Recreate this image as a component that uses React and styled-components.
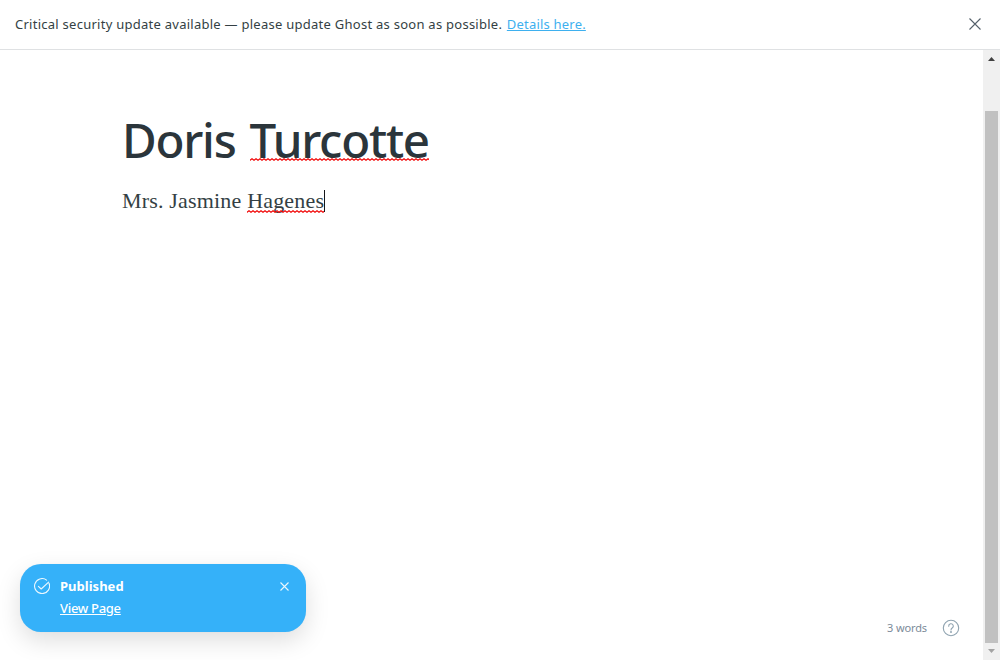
import React from "react";
import styled, { createGlobalStyle } from "styled-components";

const GlobalStyle = createGlobalStyle`
  * { box-sizing: border-box; }
  html, body { margin: 0; height: 100%; overflow: hidden; background: #fff; }
  body { font-family: "Open Sans", "Noto Sans", sans-serif; color: #394047; }
  #root { height: 100%; }
`;

const Page = styled.div`
  height: 660px;
  display: flex;
  flex-direction: column;
`;

const Banner = styled.header`
  height: 50px;
  flex: none;
  display: flex;
  align-items: center;
  justify-content: space-between;
  padding: 0 19px 1px 15px;
  border-bottom: 1px solid #dfe1e3;
  font-family: "Noto Sans", sans-serif;
  font-size: 13px;
  letter-spacing: 0.26px;
  line-height: 20px;
  color: #343f44;
  white-space: nowrap;
`;

const BannerLink = styled.a`
  margin-left: 1px;
  letter-spacing: 0.2px;
  color: #3eb0ef;
  text-decoration: underline;
`;

const IconButton = styled.button`
  display: flex;
  padding: 0;
  border: 0;
  background: none;
  color: inherit;
`;

const BannerClose = styled(IconButton)`
  color: #54606a;
`;

const Main = styled.div`
  flex: 1;
  display: flex;
  min-height: 0;
`;

const Editor = styled.main`
  flex: 1;
  display: flex;
  flex-direction: column;
  padding: 59px 122px 0;
  white-space: nowrap;
`;

const Title = styled.h1`
  margin: 0;
  height: 62px;
  font-family: "Noto Sans", sans-serif;
  font-size: 47.5px;
  font-weight: 530;
  line-height: 61px;
  letter-spacing: -1.25px;
  word-spacing: 3px;
  color: #2b353b;
`;

const Body = styled.p`
  margin: 14px 0 0;
  display: flex;
  align-items: center;
  height: 32px;
  font-family: "Liberation Serif", serif;
  font-size: 22px;
  letter-spacing: 0.18px;
  line-height: 32px;
  color: #343f44;
  white-space: pre;
`;

const Misspelled = styled.span`
  position: relative;
  display: inline-block;
`;

const Wave = styled.svg`
  position: absolute;
  left: 0;
  top: ${(p) => p.$top}px;
  width: 100%;
  height: 3px;
`;

const Caret = styled.span`
  width: 1px;
  height: 22px;
  background: #15171a;
`;

const ScrollTrack = styled.div`
  width: 17px;
  display: flex;
  flex-direction: column;
  align-items: center;
  background: #f0f0f0;
`;

const ScrollArrow = styled.svg`
  width: 17px;
  height: 17px;
  flex: none;
  fill: ${(p) => p.$color};
`;

const ScrollThumb = styled.div`
  width: 13px;
  height: 532px;
  margin-top: 44px;
  background: #c1c1c1;
`;

const Toast = styled.aside`
  position: absolute;
  left: 20px;
  top: 564px;
  width: 286px;
  height: 68px;
  display: flex;
  align-items: flex-start;
  padding: 14px 17px 0 14px;
  border-radius: 21px;
  background: #35b1f9;
  color: #fff;
  font-size: 13px;
  box-shadow: 0 9px 24px rgba(0, 0, 0, 0.13), 0 0 2px rgba(0, 0, 0, 0.03);
`;

const ToastText = styled.div`
  flex: 1;
  display: flex;
  flex-direction: column;
  align-items: flex-start;
  padding-left: 10px;
  margin-top: -3px;
  font-family: "Noto Sans", sans-serif;
  line-height: 22px;
`;

const ToastTitle = styled.strong`
  font-weight: 700;
  letter-spacing: 0.02px;
`;

const ToastLink = styled.a`
  color: #fff;
  font-weight: 500;
  letter-spacing: -0.3px;
  text-decoration: underline;
`;

const ToastClose = styled(IconButton)`
  margin-top: 4px;
  opacity: 0.9;
`;

const Status = styled.footer`
  position: absolute;
  left: 887px;
  top: 619px;
  height: 18px;
  display: flex;
  align-items: center;
  gap: 15px;
  font-family: "Noto Sans", sans-serif;
  font-size: 11px;
  line-height: 18px;
  letter-spacing: -0.12px;
  color: #7c8b9a;
  white-space: nowrap;
`;

function Cross({ size, width }) {
  return (
    <svg width={size} height={size} viewBox={`0 0 ${size} ${size}`} fill="none" stroke="currentColor" strokeWidth={width}>
      <path d={`M.5 .5 ${size - 0.5} ${size - 0.5}M${size - 0.5} .5 .5 ${size - 0.5}`} />
    </svg>
  );
}

function Squiggle({ id, top }) {
  return (
    <Wave $top={top}>
      <defs>
        <pattern id={id} width="4" height="3" patternUnits="userSpaceOnUse">
          <path d="M-1 1.5 0 2.25 2 .75 4 2.25 5 1.5" fill="none" stroke="#f00000" strokeWidth="1.1" />
        </pattern>
      </defs>
      <rect width="100%" height="3" fill={`url(#${id})`} />
    </Wave>
  );
}

export default function App() {
  return (
    <Page>
      <GlobalStyle />
      <Banner>
        <span>
          Critical security update available — please update Ghost as soon as possible.{" "}
          <BannerLink>Details here.</BannerLink>
        </span>
        <BannerClose aria-label="Close banner"><Cross size={12} width={1.1} /></BannerClose>
      </Banner>
      <Main>
        <Editor>
          <Title>
            Doris <Misspelled>Turcotte<Squiggle id="wave-title" top={49} /></Misspelled>
          </Title>
          <Body>
            Mrs. Jasmine <Misspelled>Hagenes<Squiggle id="wave-body" top={25} /></Misspelled>
            <Caret />
          </Body>
        </Editor>
        <ScrollTrack>
          <ScrollArrow $color="#404040"><path d="M5 11h7L8.5 7z" /></ScrollArrow>
          <ScrollThumb />
          <ScrollArrow $color="#a3a3a3"><path d="M5 6h7l-3.5 4z" /></ScrollArrow>
        </ScrollTrack>
      </Main>
      <Toast>
        <svg width="16" height="16" viewBox="0 0 16 16" fill="none" stroke="#fff" strokeWidth="1.1" strokeOpacity=".9" strokeLinecap="round" strokeLinejoin="round">
          <path d="M15 5.2A7.5 7.5 0 1 1 12.6 2.1" />
          <path d="M4.4 8.3 7.2 11 14.6 4.2" />
        </svg>
        <ToastText>
          <ToastTitle>Published</ToastTitle>
          <ToastLink>View Page</ToastLink>
        </ToastText>
        <ToastClose aria-label="Dismiss"><Cross size={9} width={1.1} /></ToastClose>
      </Toast>
      <Status>
        <span>3 words</span>
        <svg width="18" height="18" viewBox="0 0 18 18" fill="none" stroke="#8fa3b0" strokeWidth="1.1" strokeLinecap="round">
          <circle cx="9" cy="9" r="7.7" />
          <path d="M6.7 7.2A2.3 2.3 0 1 1 10.2 9C9.3 9.6 9 9.9 9 10.9" />
          <circle cx="9" cy="13" r=".4" fill="#8fa3b0" />
        </svg>
      </Status>
    </Page>
  );
}
